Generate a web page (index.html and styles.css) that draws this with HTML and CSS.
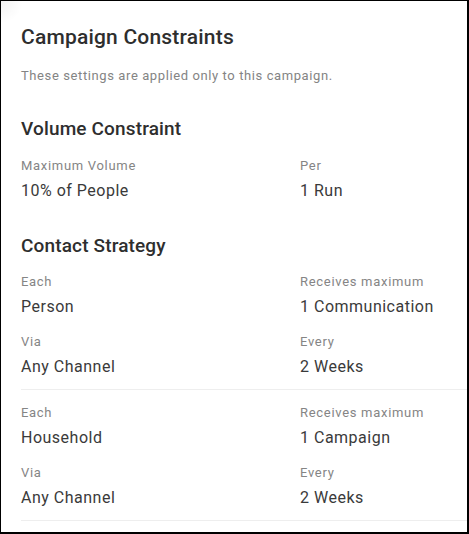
FILE: index.html
```html
<!DOCTYPE html>
<html lang="en">
  <head>
    <meta charset="UTF-8" />
    <meta name="viewport" content="width=device-width, initial-scale=1.0" />
    <title>Campaign Constraints</title>
    <link rel="stylesheet" href="styles.css">
  </head>
  <body>
    <div class="frame">
      <div class="panel">
        <h1>Campaign Constraints</h1>
        <p class="note">These settings are applied only to this campaign.</p>

        <h2>Volume Constraint</h2>
        <div class="fields">
          <div class="field">
            <div class="label">Maximum Volume</div>
            <div class="value">10% of People</div>
          </div>
          <div class="field">
            <div class="label">Per</div>
            <div class="value">1 Run</div>
          </div>
        </div>

        <h2>Contact Strategy</h2>
        <div class="rule">
          <div class="fields">
            <div class="field">
              <div class="label">Each</div>
              <div class="value">Person</div>
            </div>
            <div class="field">
              <div class="label">Receives maximum</div>
              <div class="value">1 Communication</div>
            </div>
            <div class="field">
              <div class="label">Via</div>
              <div class="value">Any Channel</div>
            </div>
            <div class="field">
              <div class="label">Every</div>
              <div class="value">2 Weeks</div>
            </div>
          </div>
        </div>
        <div class="rule">
          <div class="fields">
            <div class="field">
              <div class="label">Each</div>
              <div class="value">Household</div>
            </div>
            <div class="field">
              <div class="label">Receives maximum</div>
              <div class="value">1 Campaign</div>
            </div>
            <div class="field">
              <div class="label">Via</div>
              <div class="value">Any Channel</div>
            </div>
            <div class="field">
              <div class="label">Every</div>
              <div class="value">2 Weeks</div>
            </div>
          </div>
        </div>
      </div>
    </div>
  </body>
</html>
```

FILE: styles.css
```css
html,
body {
  margin: 0;
  background: #fff;
}

body {
  font-family: Roboto, "Liberation Sans", Arial, sans-serif;
  color: #333;
}

.frame {
  box-sizing: border-box;
  width: 469px;
  height: 534px;
  border-style: solid;
  border-color: #000;
  border-width: 1px 2px 2px 1px;
  overflow: hidden;
  background: radial-gradient(circle at 0 0, rgba(0, 0, 0, 0.05), rgba(0, 0, 0, 0) 22px) no-repeat #fff;
}

.panel {
  padding: 24px 0 0 20px;
  width: 520px;
}

h1 {
  margin: 0;
  font-size: 21px;
  line-height: 24px;
  font-weight: 500;
  letter-spacing: 0.2px;
  color: #2e2e2e;
}

.note {
  margin: 18px 0 0;
  font-size: 13px;
  line-height: 18px;
  letter-spacing: 0.6px;
  color: #848484;
}

h2 {
  margin: 32px 0 0;
  font-size: 19px;
  line-height: 24px;
  font-weight: 500;
  letter-spacing: 0.15px;
  color: #2e2e2e;
}

.fields {
  display: grid;
  grid-template-columns: 279px 1fr;
  row-gap: 15px;
  margin-top: 16px;
}

.label {
  font-size: 13px;
  line-height: 18px;
  letter-spacing: 0.7px;
  color: #858585;
}

.value {
  margin-top: 5px;
  font-size: 16px;
  line-height: 22px;
  letter-spacing: 0.5px;
  color: #3a3a3a;
}

.rule {
  border-bottom: 1px solid #eee;
  padding-bottom: 11px;
}

.rule .fields {
  margin-top: 15px;
}

.rule + .rule .fields {
  margin-top: 14px;
}
```
